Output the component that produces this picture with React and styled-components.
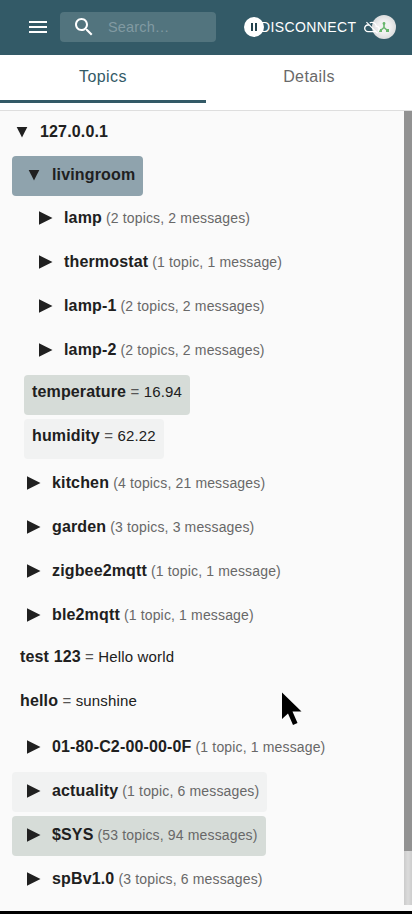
import React from 'react';
import styled, { createGlobalStyle } from 'styled-components';

const Global = createGlobalStyle`
  * { box-sizing: border-box; }
  body { margin: 0; background: #000; overflow: hidden; }
`;

const Page = styled.div`
  position: relative;
  width: 412px;
  height: 914px;
  padding-bottom: 3px;
  display: flex;
  flex-direction: column;
  background: #000;
  color: #202020;
  font-family: "Liberation Sans", Arial, sans-serif;
  letter-spacing: 0.15px;
`;

const AppBar = styled.header`
  display: flex;
  align-items: center;
  flex: none;
  height: 55px;
  padding: 0 16px 1px 29px;
  background: #335a67;
  color: #fff;
`;

const MenuIcon = styled.svg`
  flex: none;
  width: 18px;
  height: 12px;
  margin-right: 13px;
`;

const SearchBox = styled.div`
  display: flex;
  align-items: center;
  flex: none;
  width: 156px;
  height: 30px;
  padding-left: 12px;
  border-radius: 4px;
  background: #52747e;
`;

const SearchIcon = styled.svg`
  width: 24px;
  height: 24px;
`;

const Placeholder = styled.span`
  margin-left: 12px;
  padding-bottom: 1px;
  font-size: 14.5px;
  letter-spacing: 0.15px;
  color: #819aa2;
`;

const PauseBadge = styled.div`
  display: flex;
  align-items: center;
  justify-content: center;
  flex: none;
  width: 20px;
  height: 20px;
  margin-left: 28px;
  border-radius: 50%;
  background: #fff;
  z-index: 1;
`;

const DisconnectButton = styled.div`
  display: flex;
  align-items: center;
  flex: none;
  margin-left: -4px;
  font-size: 14px;
  letter-spacing: 0.4px;
  white-space: nowrap;
`;

const CloudOffIcon = styled.svg`
  position: relative;
  z-index: 1;
  width: 16px;
  height: 16px;
  margin-left: 7px;
`;

const HealthBadge = styled.div`
  display: flex;
  align-items: center;
  justify-content: center;
  flex: none;
  width: 24px;
  height: 24px;
  margin-left: -8px;
  border-radius: 50%;
  background: radial-gradient(#f1f1f1 35%, #d8dadb 75%);
`;

const Tabs = styled.nav`
  display: grid;
  grid-template-columns: 1fr 1fr;
  flex: none;
  height: 56px;
  padding-bottom: 7px;
  background: #fff;
  border-bottom: 1px solid #dedede;
`;

const Tab = styled.div`
  display: flex;
  align-items: center;
  justify-content: center;
  padding-bottom: ${(p) => (p.$active ? 2 : 5)}px;
  border-bottom: ${(p) => (p.$active ? '3px solid #335a67' : 'none')};
  color: ${(p) => (p.$active ? '#335a67' : '#696969')};
  font-size: 16px;
  letter-spacing: 0.4px;
`;

const Body = styled.main`
  display: flex;
  flex: 1;
  min-height: 0;
  background: #fafafa;
`;

const Tree = styled.div`
  flex: 1;
  display: flex;
  flex-direction: column;
  align-items: flex-start;
  padding-top: 1px;
`;

const BG = { selected: '#8fa3ad', changed: '#d6dcd8', fading: '#f1f2f2', none: 'transparent' };

const Row = styled.div`
  display: flex;
  align-items: center;
  flex: none;
  height: 40px;
  margin: ${(p) => p.$gap}px 0 0 ${(p) => p.$indent * 12}px;
  padding: 0 8px ${(p) => p.$lift}px;
  border-radius: 4px;
  background: ${(p) => BG[p.$tone]};
  white-space: nowrap;
`;

const Arrow = styled.svg`
  width: 14px;
  height: 14px;
  margin: 0 11px 0 7px;
`;

const Line = styled.span`
  font-size: 15px;
  line-height: 20px;
`;

const Name = styled.b`
  font-size: 16px;
`;

const Meta = styled.span`
  font-size: 14px;
  color: #686868;
`;

const Equals = styled.span`
  color: #555;
`;

const Scrollbar = styled.div`
  flex: none;
  width: 8px;
  height: 794px;
  padding-top: 740px;
  background: #929292;
`;

const Thumb = styled.div`
  height: 54px;
  background: linear-gradient(90deg, #cbcbcb, #dbdbdb 50%, #cdcdcd);
`;

const Cursor = styled.svg`
  position: absolute;
  left: 281px;
  top: 692px;
  width: 22px;
  height: 34px;
`;

const rows = [
  { name: '127.0.0.1', indent: 0, state: 'open', gap: 0, lift: 0 },
  { name: 'livingroom', indent: 1, state: 'open', tone: 'selected', lift: 2 },
  { name: 'lamp', indent: 2, meta: '(2 topics, 2 messages)', lift: 4 },
  { name: 'thermostat', indent: 2, meta: '(1 topic, 1 message)', lift: 4 },
  { name: 'lamp-1', indent: 2, meta: '(2 topics, 2 messages)', lift: 4 },
  { name: 'lamp-2', indent: 2, meta: '(2 topics, 2 messages)', lift: 4 },
  { name: 'temperature', indent: 2, value: '16.94', tone: 'changed', gap: 3 },
  { name: 'humidity', indent: 2, value: '62.22', tone: 'fading' },
  { name: 'kitchen', indent: 1, meta: '(4 topics, 21 messages)', gap: 5 },
  { name: 'garden', indent: 1, meta: '(3 topics, 3 messages)' },
  { name: 'zigbee2mqtt', indent: 1, meta: '(1 topic, 1 message)' },
  { name: 'ble2mqtt', indent: 1, meta: '(1 topic, 1 message)' },
  { name: 'test 123', indent: 1, value: 'Hello world' },
  { name: 'hello', indent: 1, value: 'sunshine' },
  { name: '01-80-C2-00-00-0F', indent: 1, meta: '(1 topic, 1 message)' },
  { name: 'actuality', indent: 1, meta: '(1 topic, 6 messages)', tone: 'fading' },
  { name: '$SYS', indent: 1, meta: '(53 topics, 94 messages)', tone: 'changed' },
  { name: 'spBv1.0', indent: 1, meta: '(3 topics, 6 messages)' },
];

function TopicRow({ name, indent, state, meta, value, tone = 'none', gap = 4, lift }) {
  const leaf = value !== undefined;
  return (
    <Row $indent={indent} $tone={tone} $gap={gap} $lift={lift ?? (leaf ? 6 : 2)}>
      {!leaf && (
        <Arrow viewBox="0 0 14 14" fill="#202020">
          <path d={state === 'open' ? 'M1.7 2H12.3L7 12.4Z' : 'M0 0.3L13.5 7L0 13.7Z'} />
        </Arrow>
      )}
      <Line>
        <Name>{name}</Name>
        {meta && <Meta> {meta}</Meta>}
        {leaf && <><Equals> = </Equals>{value}</>}
      </Line>
    </Row>
  );
}

export default function App() {
  return (
    <Page>
      <Global />
      <AppBar>
        <MenuIcon viewBox="0 0 18 12" fill="#fff">
          <path d="M0 0h18v2H0zM0 5h18v2H0zM0 10h18v2H0z" />
        </MenuIcon>
        <SearchBox>
          <SearchIcon viewBox="0 0 24 24" fill="#fff">
            <path d="M15.5 14h-.79l-.28-.27C15.41 12.59 16 11.11 16 9.5 16 5.91 13.09 3 9.5 3S3 5.91 3 9.5 5.91 16 9.5 16c1.61 0 3.09-.59 4.23-1.57l.27.28v.79l5 4.99L20.49 19l-4.99-5zm-6 0C7.01 14 5 11.99 5 9.5S7.01 5 9.5 5 14 7.01 14 9.5 11.99 14 9.5 14z" />
          </SearchIcon>
          <Placeholder>Search…</Placeholder>
        </SearchBox>
        <PauseBadge>
          <svg width="6" height="8" viewBox="0 0 6 8" fill="#24434e">
            <path d="M0 0h2v8H0zM4 0h2v8H4z" />
          </svg>
        </PauseBadge>
        <DisconnectButton>
          DISCONNECT
          <CloudOffIcon viewBox="0 0 24 24" fill="#fff">
            <path d="M19.35 10.04C18.67 6.59 15.64 4 12 4c-1.48 0-2.85.43-4.01 1.17l1.46 1.46C10.21 6.23 11.08 6 12 6c3.04 0 5.5 2.46 5.5 5.5v.5H19c1.66 0 3 1.34 3 3 0 1.13-.64 2.11-1.56 2.62l1.45 1.45C23.16 18.16 24 16.68 24 15c0-2.64-2.05-4.78-4.65-4.96zM3 5.27l2.75 2.74C2.56 8.15 0 10.77 0 14c0 3.31 2.69 6 6 6h11.73l2 2L21 20.73 4.27 4 3 5.27zM7.73 10l8 8H6c-2.21 0-4-1.79-4-4s1.79-4 4-4h1.73z" />
          </CloudOffIcon>
        </DisconnectButton>
        <HealthBadge>
          <svg width="10" height="10" viewBox="0 0 10 10" fill="none" stroke="#68b66c">
            <path d="M5 2v3.5L1.5 8.5M5 5.5l3.5 3" strokeWidth="1.6" />
            <g fill="#68b66c" stroke="none">
              <circle cx="5" cy="1.5" r="1.4" />
              <path d="M0 7h3v3H0zM7 7h3v3H7z" />
            </g>
          </svg>
        </HealthBadge>
      </AppBar>
      <Tabs>
        <Tab $active>Topics</Tab>
        <Tab>Details</Tab>
      </Tabs>
      <Body>
        <Tree>
          {rows.map((row) => (
            <TopicRow key={row.name} {...row} />
          ))}
        </Tree>
        <Scrollbar>
          <Thumb />
        </Scrollbar>
      </Body>
      <Cursor viewBox="0 0 22 34">
        <path d="M1 0.5V27L7 21.5L12 33L16.5 31L11.5 19.5H20.5Z" fill="#000" />
      </Cursor>
    </Page>
  );
}
